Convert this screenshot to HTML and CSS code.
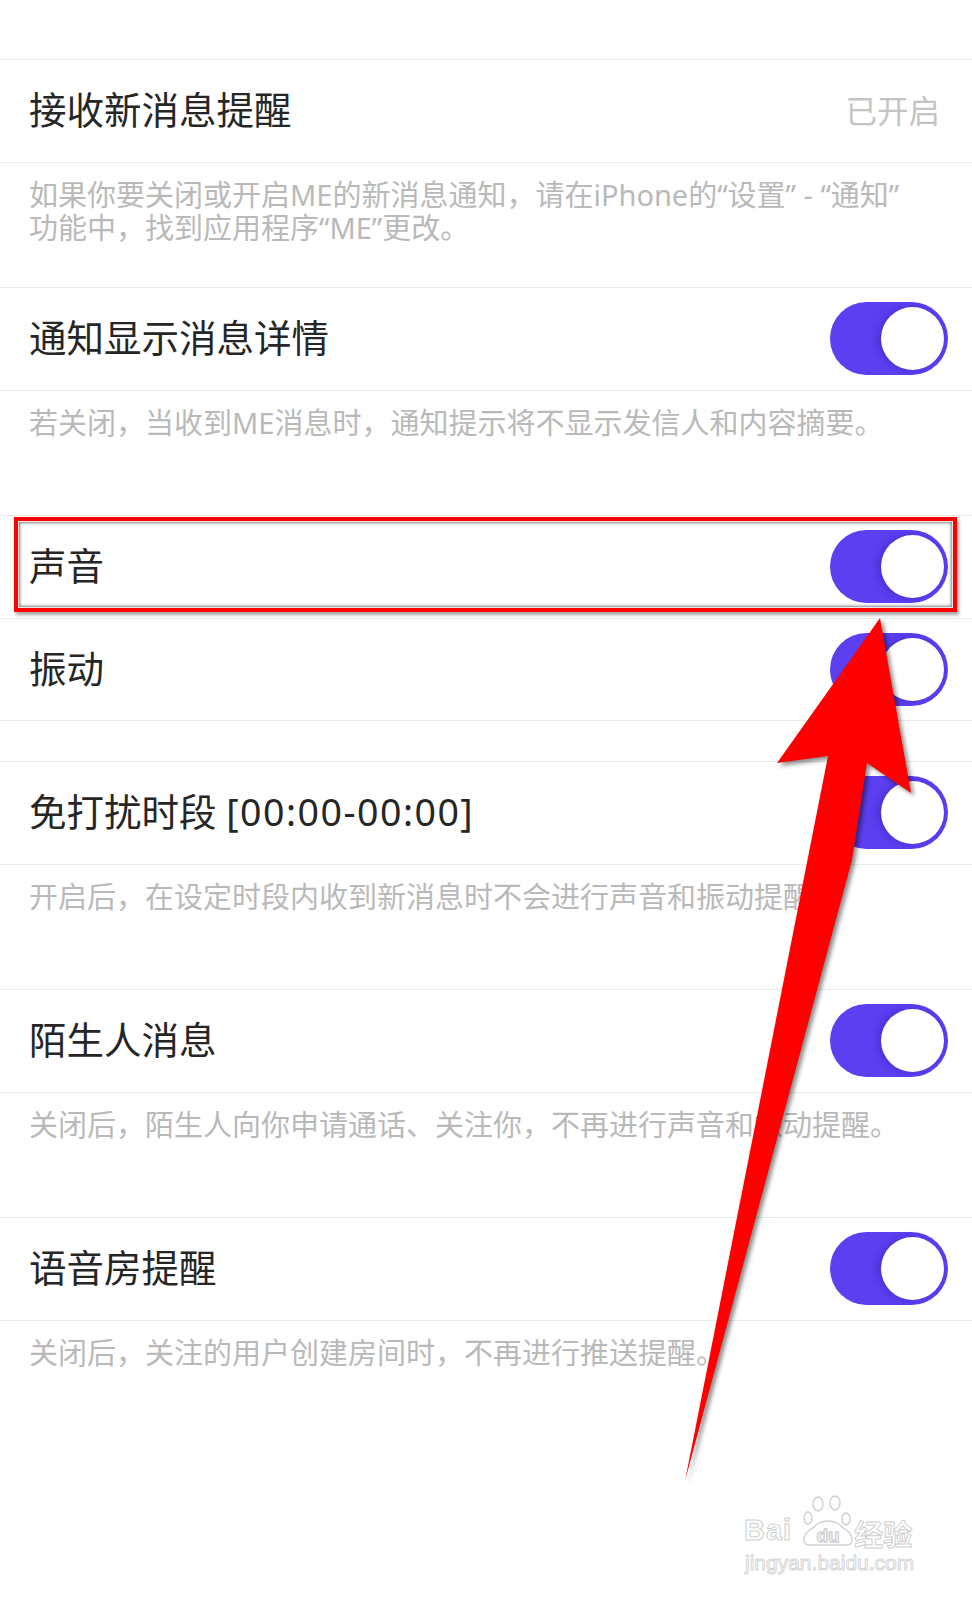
FILE: index.html
```html
<!DOCTYPE html>
<html lang="zh-CN">
<head>
<meta charset="utf-8">
<title>新消息通知</title>
<link rel="stylesheet" href="styles.css">
</head>
<body>
<div class="page">
  <div class="top-space"></div>

  <section class="group">
    <div class="row">
      <span class="label">接收新消息提醒</span>
      <span class="value">已开启</span>
    </div>
  </section>
  <p class="note">如果你要关闭或开启ME的新消息通知，请在iPhone的“设置” - “通知”功能中，找到应用程序“ME”更改。</p>

  <section class="group">
    <div class="row">
      <span class="label">通知显示消息详情</span>
      <span class="switch"><span class="knob"></span></span>
    </div>
  </section>
  <p class="note">若关闭，当收到ME消息时，通知提示将不显示发信人和内容摘要。</p>

  <section class="group">
    <div class="row">
      <span class="label">声音</span>
      <span class="switch"><span class="knob"></span></span>
      <div class="highlight"></div>
    </div>
    <div class="row">
      <span class="label">振动</span>
      <span class="switch"><span class="knob"></span></span>
    </div>
  </section>
  <div class="spacer"></div>

  <section class="group">
    <div class="row">
      <span class="label">免打扰时段 <span class="time">[00:00-00:00]</span></span>
      <span class="switch"><span class="knob"></span></span>
    </div>
  </section>
  <p class="note">开启后，在设定时段内收到新消息时不会进行声音和振动提醒。</p>

  <section class="group">
    <div class="row">
      <span class="label">陌生人消息</span>
      <span class="switch"><span class="knob"></span></span>
    </div>
  </section>
  <p class="note">关闭后，陌生人向你申请通话、关注你，不再进行声音和振动提醒。</p>

  <section class="group">
    <div class="row">
      <span class="label">语音房提醒</span>
      <span class="switch"><span class="knob"></span></span>
    </div>
  </section>
  <p class="note">关闭后，关注的用户创建房间时，不再进行推送提醒。</p>

  <svg class="arrow" width="972" height="1600" viewBox="0 0 972 1600" aria-hidden="true">
    <polygon points="880,618 911,793 867,763 852,860 685,1481 828,756 777,763" fill="#ff0000"/>
  </svg>

  <div class="watermark">
    <div class="wm-line">
      <span class="wm-bai">Bai</span>
      <svg class="wm-paw" width="52" height="54" viewBox="0 0 52 54" aria-hidden="true">
        <ellipse cx="6" cy="24" rx="4" ry="6" />
        <ellipse cx="16" cy="10" rx="5" ry="7" />
        <ellipse cx="33" cy="9" rx="5" ry="7" />
        <ellipse cx="44" cy="25" rx="4" ry="6" />
        <path d="M7 51 C0 51 0 41 8 36 C14 32 16 27 26 27 C36 27 38 32 44 36 C52 41 52 51 45 51 Z" />
        <text x="26" y="48" text-anchor="middle">du</text>
      </svg>
      <span class="wm-jy">经验</span>
    </div>
    <div class="wm-url">jingyan.baidu.com</div>
  </div>
</div>
</body>
</html>
```

FILE: styles.css
```css
* {
  box-sizing: border-box;
}

html,
body {
  margin: 0;
  padding: 0;
  background: #ffffff;
}

body {
  font-family: "Noto Sans", "Noto Sans CJK SC", sans-serif;
}

.page {
  position: relative;
  width: 972px;
  height: 1600px;
  overflow: hidden;
  background: #ffffff;
}

.top-space {
  height: 59px;
}

.group {
  border-top: 1px solid #e9e9e9;
  border-bottom: 1px solid #e9e9e9;
}

.row {
  position: relative;
  height: 101.5px;
  display: flex;
  align-items: center;
  justify-content: space-between;
  padding: 0 24px 0 29px;
}

.row + .row {
  height: 102.5px;
  border-top: 1px solid #e9e9e9;
}

.label {
  font-size: 37.5px;
  line-height: 1;
  color: #262626;
  margin-top: -2px;
}

.time {
  letter-spacing: 1.5px;
}

.value {
  font-size: 31.5px;
  line-height: 1;
  color: #c4c4c4;
  margin-right: 8px;
}

.note {
  margin: 0;
  height: 124.5px;
  padding: 15px 50px 0 29px;
  font-size: 29px;
  line-height: 33px;
  color: #b9b9b9;
}

.spacer {
  height: 40px;
}

.switch {
  width: 118px;
  height: 73px;
  border-radius: 37px;
  background: #5b3ff1;
  display: flex;
  align-items: center;
  justify-content: flex-end;
  padding-right: 4px;
  flex-shrink: 0;
}

.knob {
  width: 63px;
  height: 63px;
  border-radius: 50%;
  background: #ffffff;
  box-shadow: -3px 0 7px rgba(40, 20, 140, 0.35);
}

.highlight {
  position: absolute;
  left: 14px;
  right: 15px;
  top: 1px;
  bottom: 5.5px;
  border: 4px solid #ff0000;
  box-shadow:
    inset 0 0 0 1px #e6e6e6,
    inset 0 0 3px 2px rgba(0, 0, 0, 0.5),
    2px 3px 3px rgba(0, 0, 0, 0.35);
  pointer-events: none;
}

.arrow {
  position: absolute;
  left: 0;
  top: 0;
  pointer-events: none;
  filter: drop-shadow(3px 3px 2px rgba(0, 0, 0, 0.45));
}

.watermark {
  position: absolute;
  left: 744px;
  top: 1490px;
  width: 180px;
  color: #ffffff;
  pointer-events: none;
}

.wm-line {
  display: flex;
  align-items: flex-end;
  height: 58px;
}

.wm-bai {
  font-family: "Liberation Sans", Arial, sans-serif;
  font-weight: bold;
  font-size: 29px;
  line-height: 29px;
  letter-spacing: 1px;
  -webkit-text-stroke: 1px #cfcfcf;
  margin-bottom: 3px;
}

.wm-paw {
  fill: #ffffff;
  stroke: #cfcfcf;
  stroke-width: 1.4;
  margin-left: 10px;
}

.wm-paw text {
  font-family: "Liberation Sans", Arial, sans-serif;
  font-weight: bold;
  font-size: 19px;
}

.wm-jy {
  font-family: "Noto Sans CJK SC", sans-serif;
  font-weight: bold;
  font-size: 29px;
  line-height: 29px;
  -webkit-text-stroke: 1px #cfcfcf;
}

.wm-url {
  font-family: "Liberation Sans", Arial, sans-serif;
  font-size: 21px;
  line-height: 24px;
  margin-top: 3px;
  margin-left: 1px;
  -webkit-text-stroke: 1px #d6d6d6;
}
```
